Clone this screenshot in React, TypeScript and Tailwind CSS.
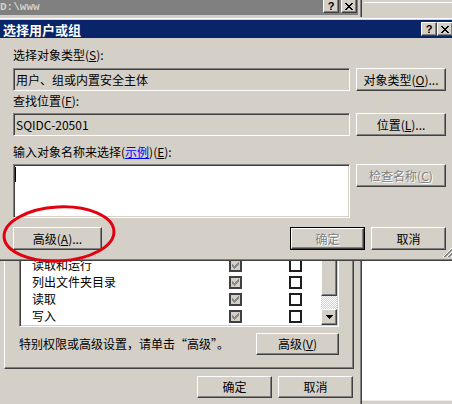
import React from 'react';

const raised =
  'border border-t-white border-l-white border-r-[#404040] border-b-[#404040] shadow-[inset_-1px_-1px_0_#808080]';
const sunken =
  'border border-t-[#808080] border-l-[#808080] border-r-white border-b-white shadow-[inset_1px_1px_0_#404040,inset_-1px_-1px_0_#d4d0c8]';
const greyed = 'text-[#808080] [text-shadow:1px_1px_0_#ffffff]';

const U = ({ children }: { children: React.ReactNode }) => (
  <span className="underline underline-offset-[1px]">{children}</span>
);

const CloseGlyph = () => (
  <svg width="8" height="7" viewBox="0 0 8 7" shapeRendering="crispEdges">
    <path
      d="M0 0h2v1H0zM6 0h2v1H6zM1 1h2v1H1zM5 1h2v1H5zM2 2h4v1H2zM3 3h2v1H3zM2 4h4v1H2zM1 5h2v1H1zM5 5h2v1H5zM0 6h2v1H0zM6 6h2v1H6z"
      fill="#000"
    />
  </svg>
);

const HelpGlyph = () => (
  <span className="font-['Liberation_Sans',sans-serif] font-bold text-[11px] leading-none text-black">?</span>
);

const CheckGlyph = ({ color }: { color: string }) => (
  <svg width="7" height="7" viewBox="0 0 7 7" shapeRendering="crispEdges">
    <path
      d="M6 0h1v1H6zM5 1h2v1H5zM0 2h1v1H0zM4 2h3v1H4zM0 3h2v1H0zM3 3h3v1H3zM0 4h5v1H0zM1 5h3v1H1zM2 6h1v1H2z"
      fill={color}
    />
  </svg>
);

const DownArrow = () => (
  <svg width="7" height="4" viewBox="0 0 7 4" shapeRendering="crispEdges">
    <path d="M0 0h7v1H0zM1 1h5v1H1zM2 2h3v1H2zM3 3h1v1H3z" fill="#000" />
  </svg>
);

const CaptionButton = ({ children }: { children: React.ReactNode }) => (
  <div className={`w-[16px] h-[14px] bg-[#d4d0c8] flex items-center justify-center ${raised}`}>{children}</div>
);

const Button = ({
  className = '',
  disabled = false,
  children,
}: {
  className?: string;
  disabled?: boolean;
  children: React.ReactNode;
}) => (
  <button
    type="button"
    className={`flex items-center justify-center bg-[#d4d0c8] text-[12px] leading-[12px] ${raised} ${disabled ? greyed : 'text-black'} ${className}`}
  >
    {children}
  </button>
);

const Checkbox = ({ checked = false, disabled = false }: { checked?: boolean; disabled?: boolean }) => (
  <div
    className={`w-[13px] h-[13px] shrink-0 border-2 flex items-center justify-center ${
      disabled ? 'border-[#404040] bg-[#d4d0c8]' : 'border-[#1e1e1e] bg-white'
    }`}
  >
    {checked && <CheckGlyph color={disabled ? '#8a8a8a' : '#000'} />}
  </div>
);

const permissions = ['完全控制', '修改', '读取和运行', '列出文件夹目录', '读取', '写入'];

const PropertiesDialog = () => (
  <div className="absolute left-0 top-[-3px] w-[362px] h-[407px] bg-[#d4d0c8] border-r border-r-[#404040] shadow-[inset_-1px_0_0_#808080] flex flex-col">
    <div className="h-[18px] shrink-0 mr-[3px] bg-[#808080] flex items-center pr-[1px]">
      <span className="font-['Liberation_Mono',monospace] font-bold text-[11px] leading-[11px] text-[#d4d0c8] mt-[2px]">
        D:\www
      </span>
      <div className="ml-auto flex gap-[2px]">
        <CaptionButton>
          <HelpGlyph />
        </CaptionButton>
        <CaptionButton>
          <CloseGlyph />
        </CaptionButton>
      </div>
    </div>

    {/* tab page */}
    <div className="flex-1 mt-[20px] ml-[4px] w-[350px] flex flex-col justify-end pl-[14px] pr-[14px] pb-[13px] border border-t-white border-l-white border-r-[#404040] border-b-[#404040] shadow-[inset_-1px_-1px_0_#808080]">
      <div className={`h-[100px] shrink-0 flex p-[1px] bg-white overflow-hidden ${sunken}`}>
        <div className="flex-1 flex flex-col justify-end overflow-hidden">
          {permissions.map((name) => (
            <div key={name} className="h-[17px] shrink-0 flex items-center">
              <span className="w-[208px] pl-[11px] -mt-[1px]">{name}</span>
              <Checkbox checked disabled />
              <span className="w-[47px]" />
              <Checkbox />
            </div>
          ))}
        </div>
        <div className="w-[16px] flex flex-col justify-end">
          <div className={`h-[60px] shrink-0 bg-[#d4d0c8] ${raised}`} />
          <div className="h-[13px] shrink-0 [background-image:repeating-conic-gradient(#ffffff_0_25%,#d4d0c8_0_50%)] [background-size:2px_2px]" />
          <div className={`h-[16px] shrink-0 bg-[#d4d0c8] flex items-center justify-center ${raised}`}>
            <DownArrow />
          </div>
        </div>
      </div>
      <div className="mt-[6px] h-[22px] flex items-center justify-between">
        <span>特别权限或高级设置，请单击“高级”。</span>
        <Button className="w-[83px] h-[22px]">
          高级(<U>V</U>)
        </Button>
      </div>
    </div>

    <div className="mt-[7px] mb-[6px] ml-[4px] w-[350px] pr-[1px] flex justify-end gap-[6px]">
      <Button className="w-[75px] h-[22px]">确定</Button>
      <Button className="w-[75px] h-[22px]">取消</Button>
    </div>
  </div>
);

const PickerDialog = () => (
  <div className="absolute left-[-3px] top-[17px] w-[461px] h-[244px] bg-[#d4d0c8] border border-t-[#d4d0c8] border-l-[#d4d0c8] border-r-[#404040] border-b-[#404040] shadow-[inset_1px_1px_0_#ffffff,inset_-1px_-1px_0_#808080] p-[2px] flex flex-col">
    <div className="h-[18px] shrink-0 bg-[#0a246a] flex items-center pl-[3px] pr-[2px]">
      <span className="text-white font-bold text-[13px] leading-[13px]">选择用户或组</span>
      <div className="ml-auto flex">
        <CaptionButton>
          <HelpGlyph />
        </CaptionButton>
        <CaptionButton>
          <CloseGlyph />
        </CaptionButton>
      </div>
    </div>

    <div className="relative flex-1 flex flex-col pl-[13px] pr-[9px]">
      <div className="mt-[11px] h-[12px]">
        选择对象类型(<U>S</U>):
      </div>
      <div className="mt-[7px] flex gap-[6px]">
        <div className={`w-[337px] h-[23px] flex items-center pl-[2px] ${sunken}`}>用户、组或内置安全主体</div>
        <Button className="w-[90px] h-[23px]">
          对象类型(<U>O</U>)...
        </Button>
      </div>

      <div className="mt-[4px] h-[12px]">
        查找位置(<U>F</U>):
      </div>
      <div className="mt-[6px] flex gap-[6px]">
        <div className={`w-[337px] h-[23px] flex items-center pl-[2px] ${sunken}`}>SQIDC-20501</div>
        <Button className="w-[90px] h-[23px]">
          位置(<U>L</U>)...
        </Button>
      </div>

      <div className="mt-[10px] h-[12px]">
        输入对象名称来选择(<span className="text-[#0000ff] underline underline-offset-[1px]">示例</span>)(<U>E</U>):
      </div>
      <div className="mt-[6px] flex items-start gap-[6px]">
        <div className={`w-[337px] h-[54px] bg-white pl-[1px] pt-[2px] ${sunken}`}>
          <div className="w-px h-[15px] bg-black" />
        </div>
        <Button disabled className="w-[90px] h-[23px]">
          检查名称(<U>C</U>)
        </Button>
      </div>

      <div className="mt-[9px] flex items-center">
        <Button className="w-[89px] h-[23px]">
          高级(<U>A</U>)...
        </Button>
        <div className="ml-auto w-[75px] h-[23px] border border-black flex">
          <Button disabled className="flex-1">
            确定
          </Button>
        </div>
        <Button className="ml-[6px] w-[75px] h-[23px]">取消</Button>
      </div>

      <svg className="absolute right-0 bottom-0" width="12" height="12" viewBox="0 0 12 12" shapeRendering="crispEdges">
        <path d="M11 0L0 11M11 4L4 11M11 8L8 11" stroke="#ffffff" />
        <path d="M11 1L1 11M11 2L2 11M11 5L5 11M11 6L6 11M11 9L9 11M11 10L10 11" stroke="#808080" />
      </svg>
    </div>
  </div>
);

export default function App() {
  return (
    <div className="relative w-[452px] h-[404px] overflow-hidden bg-white font-['Noto_Sans_CJK_SC',sans-serif] text-[12px] leading-[12px] text-black select-none">
      {/* window further back, seen on the right */}
      <div className="flex flex-col h-full">
        <div className="h-[17px] bg-[#d4d0c8] pt-[2px] pl-[364px]">
          <div className="h-px bg-white" />
        </div>
        <div className="flex-1 bg-white" />
        <div className="h-[4px] bg-[#d4d0c8] border-t border-[#ececec]" />
      </div>

      <PropertiesDialog />
      <PickerDialog />

      <svg className="absolute left-0 top-0 pointer-events-none" width="452" height="404">
        <ellipse
          cx="59"
          cy="234"
          rx="55"
          ry="27"
          transform="rotate(-3 59 234)"
          fill="none"
          stroke="#e3000f"
          strokeWidth="3"
        />
      </svg>
    </div>
  );
}
